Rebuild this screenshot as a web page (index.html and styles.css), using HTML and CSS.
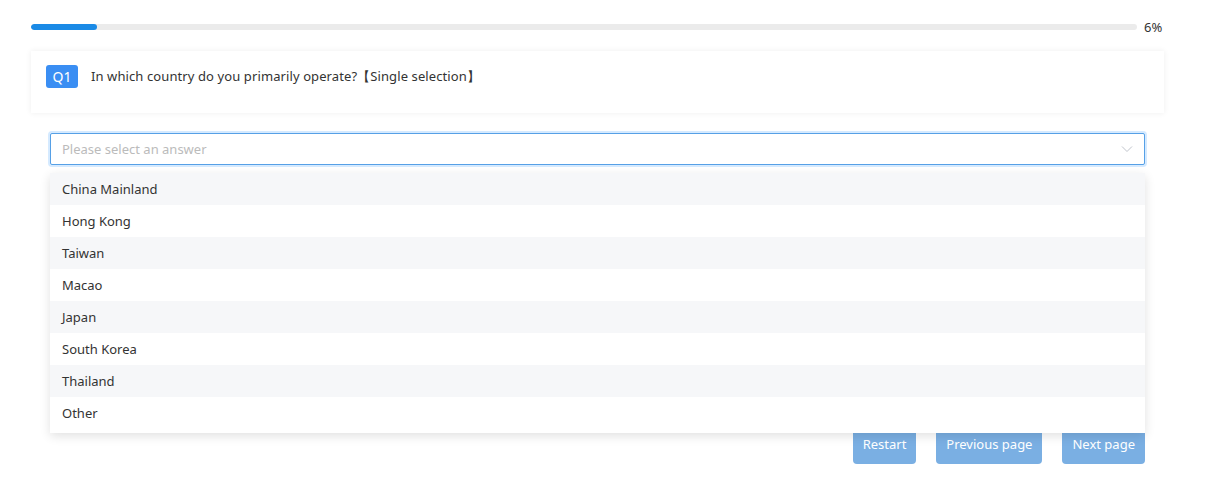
FILE: index.html
```html
<!DOCTYPE html>
<html lang="en">
<head>
    <meta charset="UTF-8">
    <meta name="viewport" content="width=device-width, initial-scale=1.0">
    <title>Questionnaire</title>
    <link rel="stylesheet" href="styles.css">
</head>
<body>
    <div class="survey">
        <div class="progress">
            <div class="progress-track">
                <div class="progress-fill" style="width: 6%"></div>
            </div>
            <span class="progress-text">6%</span>
        </div>

        <div class="question-card">
            <span class="q-badge">Q1</span>
            <span class="q-title">In which country do you primarily operate?【Single selection】</span>
        </div>

        <div class="answer">
            <div class="select">
                <span class="select-placeholder">Please select an answer</span>
                <svg class="select-arrow" width="12" height="8" viewBox="0 0 12 8">
                    <path d="M1 1.5 L6 6.5 L11 1.5" fill="none" stroke="#c0c4cc" stroke-width="1"/>
                </svg>
            </div>
            <ul class="dropdown">
                <li>China Mainland</li>
                <li>Hong Kong</li>
                <li>Taiwan</li>
                <li>Macao</li>
                <li>Japan</li>
                <li>South Korea</li>
                <li>Thailand</li>
                <li>Other</li>
            </ul>
        </div>

        <div class="actions">
            <button class="btn">Restart</button>
            <button class="btn">Previous page</button>
            <button class="btn">Next page</button>
        </div>
    </div>
</body>
</html>
```

FILE: styles.css
```css
body {
    margin: 0;
    padding: 0;
    font-family: 'Noto Sans', 'Open Sans', sans-serif;
    background-color: #fff;
    color: #333;
}

.survey {
    width: 1133px;
    padding: 20px 0 0 31px;
}

.progress {
    display: flex;
    align-items: center;
    height: 14px;
}

.progress-track {
    flex: 1;
    height: 6px;
    background-color: #ebebeb;
    border-radius: 3px;
    overflow: hidden;
}

.progress-fill {
    height: 100%;
    background-color: #1a8ae6;
    border-radius: 3px;
}

.progress-text {
    margin-left: 7px;
    width: 20px;
    font-size: 13px;
    color: #333;
}

.question-card {
    display: flex;
    align-items: center;
    margin-top: 17px;
    height: 62px;
    padding: 0 15px;
    padding-bottom: 12px;
    box-sizing: border-box;
    background-color: #fff;
    box-shadow: 0 0 6px rgba(0, 0, 0, 0.07);
}

.q-badge {
    display: inline-block;
    width: 32px;
    height: 23px;
    line-height: 23px;
    text-align: center;
    background-color: #3a8ef3;
    color: #fff;
    border-radius: 3px;
    font-size: 14px;
}

.q-title {
    margin-left: 13px;
    font-size: 13px;
    letter-spacing: 0.1px;
    color: #333;
}

.answer {
    position: relative;
    margin: 20px 19px 0;
}

.select {
    display: flex;
    align-items: center;
    justify-content: space-between;
    height: 32px;
    padding: 0 11px;
    box-sizing: border-box;
    border: 1px solid #56a0e6;
    border-radius: 2px;
    box-shadow: 0 0 0 2px rgba(64, 158, 255, 0.22);
    background-color: #fff;
}

.select-placeholder {
    font-size: 13px;
    color: #bbb;
}

.select-arrow {
    display: block;
}

.dropdown {
    position: absolute;
    top: 40px;
    left: 0;
    right: 0;
    margin: 0;
    padding: 0 0 4px;
    list-style: none;
    background-color: #fff;
    box-shadow: 0 3px 10px rgba(0, 0, 0, 0.12);
    z-index: 10;
}

.dropdown li {
    height: 32px;
    line-height: 32px;
    padding: 0 12px;
    font-size: 13px;
    color: #333;
}

.dropdown li:nth-child(odd) {
    background-color: #f6f7f9;
}

.actions {
    display: flex;
    justify-content: flex-end;
    gap: 20px;
    margin: 259px 19px 0;
}

.btn {
    height: 40px;
    padding: 0 10px;
    border: none;
    border-radius: 4px;
    background-color: #7aafe3;
    color: #fff;
    font-family: inherit;
    font-size: 13px;
    cursor: pointer;
}
```
